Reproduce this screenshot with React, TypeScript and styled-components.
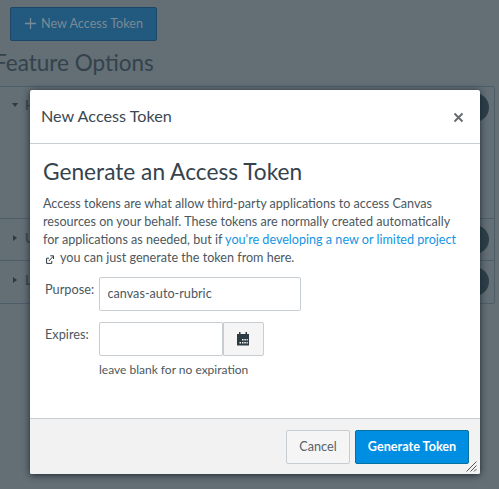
import React from "react";
import styled, { createGlobalStyle } from "styled-components";

const Global = createGlobalStyle`
  * { box-sizing: border-box; }
  body { margin: 0; overflow: hidden; background: #636e75; font-family: Lato, "Liberation Sans", sans-serif; font-size: 12.6px; color: #2d3b45; }
  h1, h2, p { margin: 0; font-weight: 400; }
`;

const Page = styled.main`
  position: relative;
  height: 489px;
  overflow: hidden;
`;
const Background = styled.div`
  padding-top: 7px;
`;
const NewTokenButton = styled.button`
  display: flex;
  align-items: center;
  justify-content: center;
  gap: 5px;
  width: 147px;
  height: 34px;
  margin-left: 10px;
  padding: 0 0 1px 1px;
  border: 1px solid #1c4768;
  border-radius: 2px;
  background: #22597f;
  color: #7a8a96;
  font: 400 12.65px Lato, sans-serif;
`;
const SectionTitle = styled.h2`
  margin: 4px 0 0 -6px;
  height: 41px;
  line-height: 36px;
  font-size: 22.5px;
  color: #34424c;
  white-space: nowrap;
`;
const FeatureTable = styled.section`
  width: 500px;
  margin-left: -5px;
  border: 1px solid #4e5e69;
  border-radius: 2px;
`;
const FeatureRow = styled.div<{ $height: number }>`
  display: flex;
  justify-content: space-between;
  height: ${(p) => p.$height}px;
  padding: 6px 5px 0 15px;
  & + & { border-top: 1px solid #4e5e69; }
`;
const FeatureName = styled.div<{ $open: boolean }>`
  display: flex;
  align-items: center;
  gap: 7px;
  height: ${(p) => (p.$open ? 24 : 26)}px;
  font-weight: 700;
  color: #3a4852;
`;
const Toggle = styled.span`
  width: 46px;
  height: 29px;
  border-radius: 15px;
  background: #2d3f4a;
`;
const Dialog = styled.section`
  position: absolute;
  left: 30px;
  top: 90px;
  width: 450px;
  height: 384px;
  display: flex;
  flex-direction: column;
  background: #fff;
  border-radius: 2px;
  overflow: hidden;
`;
const DialogShadow = styled.div`
  position: absolute;
  left: 30px;
  top: 90px;
  width: 450px;
  height: 384px;
  border-radius: 2px;
  box-shadow: 0 1px 7px rgba(20, 32, 40, 0.9);
`;
const DialogHeader = styled.header`
  display: flex;
  align-items: center;
  justify-content: space-between;
  height: 54px;
  padding: 0 16px 0 11px;
  border-bottom: 1px solid #c7cdd1;
`;
const DialogTitle = styled.h1`
  padding-bottom: 2px;
  font-size: 16.2px;
  line-height: 24px;
  color: #3a4851;
`;
const CloseButton = styled.button`
  display: flex;
  padding: 1px 0 0;
  border: 0;
  background: none;
`;
const DialogBody = styled.div`
  flex: 1;
  padding: 10px 13px 0;
`;
const BodyTitle = styled.h2`
  font-size: 22.7px;
  line-height: 36px;
  height: 41px;
  color: #35434d;
`;
const Intro = styled.p`
  line-height: 18px;
  white-space: nowrap;
  color: #4c5860;
`;
const Link = styled.a`
  color: #1495e4;
  text-decoration: none;
`;
const ExternalIcon = styled.svg`
  margin: 0 6px 0 3px;
  vertical-align: -2px;
`;
const Field = styled.div`
  display: grid;
  grid-template-columns: 54px 1fr;
  margin-left: 2px;
`;
const Fields = styled.form`
  display: grid;
  gap: 11px;
  margin-top: 10px;
`;
const Label = styled.label`
  line-height: 25px;
  font-size: 12.75px;
  color: #4c5860;
`;
const TextInput = styled.input<{ $width: number }>`
  width: ${(p) => p.$width}px;
  height: 34px;
  padding: 0 8px 1px 7.5px;
  border: 1px solid #c7cdd1;
  border-radius: 2px;
  outline: 0;
  font: 400 12.65px Lato, sans-serif;
  color: #4c5860;
`;
const DateGroup = styled.div`
  display: flex;
`;
const CalendarButton = styled.button`
  display: flex;
  align-items: center;
  justify-content: center;
  width: 41px;
  height: 34px;
  padding: 0 2px 0 0;
  border: 1px solid #c7cdd1;
  border-radius: 0 2px 2px 0;
  background: #f5f5f5;
`;
const Hint = styled.div`
  margin-top: 5px;
  line-height: 18px;
  font-size: 12px;
  color: #4c5860;
`;
const DialogFooter = styled.footer`
  display: flex;
  justify-content: flex-end;
  gap: 5px;
  height: 56px;
  padding: 11px 11px 0;
  border-top: 1px solid #c7cdd1;
  background: #f2f2f2;
`;
const FooterButton = styled.button<{ $primary?: boolean }>`
  width: ${(p) => (p.$primary ? 114 : 64)}px;
  height: 34px;
  padding: 0 0 1px;
  border: 1px solid ${(p) => (p.$primary ? "#0770a3" : "#c7cdd1")};
  border-radius: 2px;
  background: ${(p) => (p.$primary ? "#008ee2" : "#f5f5f5")};
  color: ${(p) => (p.$primary ? "#fff" : "#56626a")};
  font: ${(p) => (p.$primary ? 700 : 400)} 12.65px Lato, sans-serif;
`;
const ResizeGrip = styled.svg`
  position: absolute;
  right: 3px;
  bottom: 2px;
`;

const features = [
  { name: "H", height: 131, open: true },
  { name: "U", height: 42, open: false },
  { name: "L", height: 43, open: false },
];

export default function App() {
  return (
    <Page>
      <Global />
      <Background>
        <NewTokenButton>
          <svg width="11" height="11" viewBox="0 0 11 11" stroke="currentColor" strokeWidth="1.3">
            <path d="M5.5 0v11M0 5.5h11" />
          </svg>
          New Access Token
        </NewTokenButton>
        <SectionTitle>Feature Options</SectionTitle>
        <FeatureTable>
          {features.map((f) => (
            <FeatureRow key={f.name} $height={f.height}>
              <FeatureName $open={f.open}>
                <svg width="7" height="8" viewBox="0 0 7 8" fill="#2d3b45">
                  <path d={f.open ? "M1 2h6L4 6z" : "M2 1l4 3-4 3z"} />
                </svg>
                {f.name}
              </FeatureName>
              <Toggle />
            </FeatureRow>
          ))}
        </FeatureTable>
      </Background>
      <DialogShadow />
      <Dialog role="dialog">
        <DialogHeader>
          <DialogTitle>New Access Token</DialogTitle>
          <CloseButton aria-label="Close">
            <svg width="11" height="11" viewBox="0 0 11 11" stroke="#656b70" strokeWidth="1.9">
              <path d="M1.5 1.5l8 8M9.5 1.5l-8 8" />
            </svg>
          </CloseButton>
        </DialogHeader>
        <DialogBody>
          <BodyTitle>Generate an Access Token</BodyTitle>
          <Intro>
            Access tokens are what allow third-party applications to access Canvas
            <br />
            resources on your behalf. These tokens are normally created automatically
            <br />
            for applications as needed, but if <Link>you're developing a new or limited project</Link>
            <br />
            <ExternalIcon width="8" height="9" viewBox="0 0 8 9" fill="none" stroke="#2d3b45">
              <path d="M3 3.2H.6v5.2h5.2V6M2.8 6l4.4-4.6M4.3.8h3.2V4" />
            </ExternalIcon>
            you can just generate the token from here.
          </Intro>
          <Fields>
            <Field>
              <Label>Purpose:</Label>
              <TextInput $width={202} defaultValue="canvas-auto-rubric" />
            </Field>
            <Field>
              <Label>Expires:</Label>
              <div>
                <DateGroup>
                  <TextInput $width={124} />
                  <CalendarButton type="button" aria-label="Choose date">
                    <svg width="12" height="14" viewBox="0 0 12 14" fill="#2d3b45">
                      <path d="M2 0h1.5v2h5V0H10v2h2v11.5H0V2h2z" />
                      <path
                        fill="#f5f5f5"
                        d="M5 7h1.5v1.5H5zM7.3 7h1.5v1.5H7.3zM9.6 7h1.2v1.5H9.6zM2.5 10H4v1.5H2.5zM5 10h1.5v1.5H5zM7.3 10h1.5v1.5H7.3zM9.6 10h1.2v1.5H9.6z"
                      />
                    </svg>
                  </CalendarButton>
                </DateGroup>
                <Hint>leave blank for no expiration</Hint>
              </div>
            </Field>
          </Fields>
        </DialogBody>
        <DialogFooter>
          <FooterButton>Cancel</FooterButton>
          <FooterButton $primary>Generate Token</FooterButton>
        </DialogFooter>
        <ResizeGrip width="11" height="11" viewBox="0 0 11 11" stroke="#555" fill="none">
          <path d="M.5 10.5l10-10M4.5 10.5l6-6M8 10.5l2.5-2.5" />
        </ResizeGrip>
      </Dialog>
    </Page>
  );
}
